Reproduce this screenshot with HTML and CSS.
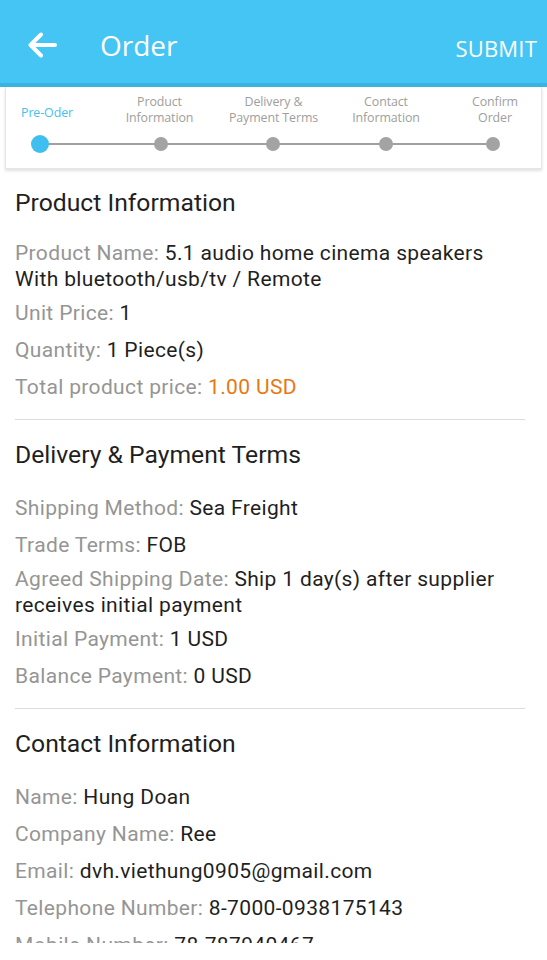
FILE: index.html
```html
<!DOCTYPE html>
<html lang="en">
<head>
<meta charset="utf-8">
<title>Order</title>
<link rel="stylesheet" href="styles.css">
</head>
<body>
<header class="appbar">
  <svg class="back" width="30" height="26" viewBox="0 0 30 26" aria-hidden="true">
    <path d="M28 13H4M14 2.5L3.5 13L14 23.5" fill="none" stroke="#fff" stroke-width="4" stroke-linecap="round" stroke-linejoin="round"/>
  </svg>
  <h1 class="title">Order</h1>
  <span class="submit">SUBMIT</span>
</header>

<nav class="stepper">
  <div class="steps">
    <div class="step step-active">Pre-Oder</div>
    <div class="step">Product<br>Information</div>
    <div class="step">Delivery &amp;<br>Payment Terms</div>
    <div class="step">Contact<br>Information</div>
    <div class="step step-last">Confirm<br>Order</div>
  </div>
  <svg class="track" width="536" height="22" viewBox="0 0 536 22" aria-hidden="true">
    <line x1="34" y1="11" x2="487" y2="11" stroke="#a0a0a0" stroke-width="2"/>
    <circle cx="34" cy="11" r="9" fill="#3fbef0"/>
    <circle cx="155" cy="11" r="7" fill="#a3a3a3"/>
    <circle cx="267" cy="11" r="7" fill="#a3a3a3"/>
    <circle cx="380" cy="11" r="7" fill="#a3a3a3"/>
    <circle cx="487" cy="11" r="7" fill="#a3a3a3"/>
  </svg>
</nav>

<main class="content">
  <section class="section">
    <h2 class="section-title">Product Information</h2>
    <p class="row"><span><span class="label">Product Name: </span>5.1 audio home cinema speakers With bluetooth/usb/tv / Remote</span></p>
    <p class="row"><span><span class="label">Unit Price: </span>1</span></p>
    <p class="row"><span><span class="label">Quantity: </span>1 Piece(s)</span></p>
    <p class="row"><span><span class="label">Total product price: </span><span class="price">1.00 USD</span></span></p>
  </section>

  <section class="section">
    <h2 class="section-title">Delivery &amp; Payment Terms</h2>
    <p class="row"><span><span class="label">Shipping Method: </span>Sea Freight</span></p>
    <p class="row"><span><span class="label">Trade Terms: </span>FOB</span></p>
    <p class="row"><span><span class="label">Agreed Shipping Date: </span>Ship 1 day(s) after supplier receives initial payment</span></p>
    <p class="row"><span><span class="label">Initial Payment: </span>1 USD</span></p>
    <p class="row"><span><span class="label">Balance Payment: </span>0 USD</span></p>
  </section>

  <section class="section">
    <h2 class="section-title">Contact Information</h2>
    <p class="row"><span><span class="label">Name: </span>Hung Doan</span></p>
    <p class="row"><span><span class="label">Company Name: </span>Ree</span></p>
    <p class="row"><span><span class="label">Email: </span>dvh.viethung0905@gmail.com</span></p>
    <p class="row"><span><span class="label">Telephone Number: </span>8-7000-0938175143</span></p>
    <p class="row"><span><span class="label">Mobile Number: </span>78-787940467</span></p>
  </section>
</main>
</body>
</html>
```

FILE: styles.css
```css
* { box-sizing: border-box; }

html, body {
  margin: 0;
  padding: 0;
  background: #fff;
}

body {
  width: 547px;
  height: 960px;
  overflow: hidden;
  font-family: Roboto, "Liberation Sans", sans-serif;
  color: #1f1f1f;
}

.appbar {
  height: 87px;
  background: #45c5f3;
  border-bottom: 4px solid #3bb3e2;
  display: flex;
  align-items: center;
  padding: 7px 10px 0 27px;
  color: #fff;
  font-family: "Open Sans", "DejaVu Sans", sans-serif;
}

.back { flex: none; }

.title {
  margin: 0 0 0 43px;
  font-size: 28px;
  font-weight: 400;
  flex: 1;
  line-height: 1;
}

.submit {
  font-size: 22px;
  letter-spacing: 0.2px;
  margin-top: 5px;
}

.stepper {
  margin: 0 5px;
  background: #fff;
  border: 1px solid #e6e6e6;
  border-top: none;
  box-shadow: 0 2px 3px rgba(0,0,0,0.12);
  padding: 6px 0 13px;
}

.steps {
  display: grid;
  grid-template-columns: 97px 113px 115px 110px 101px;
  align-items: center;
  height: 34px;
  font-family: "Open Sans", "DejaVu Sans", sans-serif;
  font-size: 12.4px;
  line-height: 16px;
  color: #9e9e9e;
  text-align: center;
  letter-spacing: -0.1px;
}

.step-active {
  color: #45c1ee;
  padding: 5px 15px 0 0;
}

.step-last { padding-left: 7px; }

.track {
  display: block;
  margin-top: 6px;
}

.content {
  height: 774px;
  overflow: hidden;
  padding: 0 22px 0 15px;
}

.section {
  border-bottom: 1px solid #dcdcdc;
  padding: 20px 0 11px;
}

.section:first-child { padding-top: 19px; }

.section-title {
  margin: 0 0 22px;
  font-size: 24.7px;
  font-weight: 400;
  line-height: 30px;
  color: #1f1f1f;
}

.row {
  display: flex;
  align-items: center;
  min-height: 32px;
  margin: 0 0 5px;
  font-size: 21px;
  letter-spacing: 0.35px;
  line-height: 26px;
  color: #1f1f1f;
}

.label { color: #959595; }

.price { color: #e8780f; }
```
